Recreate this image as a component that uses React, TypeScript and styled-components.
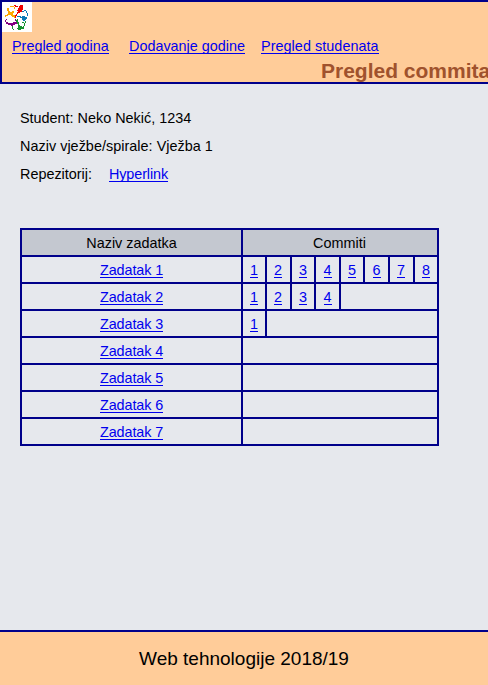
import React from "react";
import styled, { createGlobalStyle } from "styled-components";

const GlobalStyle = createGlobalStyle`
  * { box-sizing: border-box; }
  body {
    margin: 0;
    background: #e6e8ed;
    color: #000;
    font-family: "Liberation Sans", Arial, sans-serif;
    font-size: 14.4px;
    overflow: hidden;
  }
`;

const Page = styled.div`
  display: flex;
  flex-direction: column;
  height: 100vh;
  overflow: hidden;
`;

const Header = styled.header`
  flex: none;
  height: 84px;
  border: 2px solid #00008b;
  border-right: 0;
  background: #ffcc99;
  overflow: hidden;
`;

const Logo = styled.svg`
  display: block;
  width: 30px;
  height: 30px;
`;

const Nav = styled.nav`
  display: flex;
  height: 28px;
  padding: 5px 0 0 10px;
`;

const Link = styled.a<{ $gap?: number; $width?: number; $spacing?: number }>`
  display: inline-block;
  height: 17px;
  line-height: 19px;
  color: #0000ee;
  text-decoration: none;
  border-bottom: 1px solid #0000ee;
  white-space: nowrap;
  letter-spacing: ${(p) => p.$spacing ?? 0}px;
  margin-left: ${(p) => p.$gap ?? 0}px;
  width: ${(p) => (p.$width ? `${p.$width}px` : "auto")};
`;

const Title = styled.h1`
  margin: 0 0 0 319px;
  font-size: 21px;
  line-height: 22px;
  color: #a0522d;
  white-space: nowrap;
`;

const Main = styled.main`
  flex: 1;
  padding: 20px 49px 0 20px;
`;

const Info = styled.p<{ $spacing?: number }>`
  margin: 0;
  height: 28px;
  line-height: 28px;
  letter-spacing: ${(p) => p.$spacing ?? 0}px;
`;

const Table = styled.div`
  margin-top: 40px;
  width: 419px;
  border: 2px solid #00008b;
  border-bottom: 0;
`;

const Row = styled.div<{ $head?: boolean }>`
  display: grid;
  grid-template-columns: 221px 24px 25px 24px 25px 24px 25px 25px 22px;
  height: 27px;
  border-bottom: 2px solid #00008b;
  background: ${(p) => (p.$head ? "#c4c8d0" : "transparent")};
`;

const Cell = styled.div<{ $from?: number; $last?: boolean; $tight?: boolean }>`
  display: flex;
  align-items: center;
  justify-content: center;
  padding-right: ${(p) => (p.$tight ? 1 : 0)}px;
  border-right: ${(p) => (p.$from || p.$last ? "0" : "2px solid #00008b")};
  grid-column: ${(p) => (p.$from ? `${p.$from} / -1` : "auto")};
`;

const Footer = styled.footer`
  flex: none;
  height: 55px;
  border-top: 2px solid #00008b;
  background: #ffcc99;
  text-align: center;
  font-size: 19px;
  line-height: 53px;
`;

const commitCounts = [8, 4, 1, 0, 0, 0, 0];

export default function App() {
  return (
    <Page>
      <GlobalStyle />
      <Header>
        <Logo viewBox="0 0 30 30" shapeRendering="crispEdges">
          <path fill="#fff" d="M0 0h30v30H0z" />
          <g fill="#ffa800">
            <path d="M5 6h2v3h1v1h2V9h2v2h-1v2h2v2h1v1h-2v-1h-2v-1H9v-1H6v1H4v1H3v-2h2v-1h1V9H5z" />
            <path d="M8 4h4v1H8zM12 5h1v2h-1zM3 14h1v1H3z" />
          </g>
          <g fill="#f00000">
            <path d="M18 3h3v5h-1v2h-2v1h-2v1h-1v2h-1v2h-1v-3h1v-1h1v-2h1V9h-1V8h1V6h1V4h1z" />
            <path d="M13 4h3v1h-3zM12 3h2v1h-2z" />
          </g>
          <g fill="#0878b8">
            <path d="M15 14h4v1h1v-1h3v1h2v2h-1v1h-1v1h-2v-1h-1v-2h-2v-1h-3z" />
            <path d="M22 8h2v1h-2zM24 9h1v2h-1zM25 11h1v3h-1zM20 9h2v1h-2z" />
          </g>
          <g fill="#800080">
            <path d="M4 20h2v1h5v-1h3v-1h1v3h-2v1h-2v1H9v-1H6v-1H4zM13 17h1v2h-1z" />
            <path d="M3 18h1v2H3zM4 17h1v1H4z" />
          </g>
          <g fill="#16932e">
            <path d="M15 17h1v3h1v3h1v1h2v1h2v1h-1v1h-2v1h-3v-1h-1v-1h1v-4h-1v-2h-1v-2h1z" />
            <path d="M10 24h1v3h-1zM11 27h1v1h-1zM20 20h2v1h-2zM22 21h1v3h-1zM23 19h1v2h-1zM21 24h1v3h-1z" />
          </g>
        </Logo>
        <Nav>
          <Link href="#" $width={97}>Pregled godina</Link>
          <Link href="#" $gap={20} $width={116}>Dodavanje godine</Link>
          <Link href="#" $gap={16} $width={118} $spacing={0.05}>Pregled studenata</Link>
        </Nav>
        <Title>Pregled commita</Title>
      </Header>
      <Main>
        <Info>Student: Neko Nekić, 1234</Info>
        <Info $spacing={0.03}>Naziv vježbe/spirale: Vježba 1</Info>
        <Info>
          Repezitorij:<Link href="#" $gap={17} $width={59} $spacing={-0.1}>Hyperlink</Link>
        </Info>
        <Table>
          <Row $head>
            <Cell>Naziv zadatka</Cell>
            <Cell $from={2} $tight>Commiti</Cell>
          </Row>
          {commitCounts.map((count, index) => (
            <Row key={index}>
              <Cell>
                <Link href="#" $width={63} $spacing={-0.1}>Zadatak {index + 1}</Link>
              </Cell>
              {Array.from({ length: count }, (_, n) => (
                <Cell key={n} $last={n === 7} $tight={n === 1 || n === 6}>
                  <Link href="#" $width={8}>{n + 1}</Link>
                </Cell>
              ))}
              {count < 8 && <Cell $from={count + 2} />}
            </Row>
          ))}
        </Table>
      </Main>
      <Footer>Web tehnologije 2018/19</Footer>
    </Page>
  );
}
